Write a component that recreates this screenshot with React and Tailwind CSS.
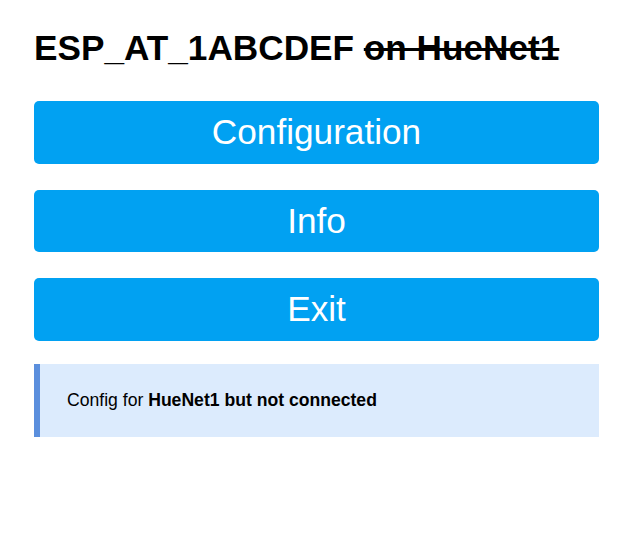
export default function App() {
  return (
    <div className="min-h-[553px] bg-white font-['Liberation_Sans',Arial,sans-serif] text-black">
      <div className="ml-[34px] w-[565px] pt-[26px]">
        <h1 className="text-[35.2px] font-bold leading-[44px]">
          ESP_AT_1ABCDEF <s>on HueNet1</s>
        </h1>
        <div className="mt-[31px] flex flex-col gap-[26px]">
          {['Configuration', 'Info', 'Exit'].map((label) => (
            <button
              key={label}
              className="h-[62.5px] w-full rounded-[5px] bg-[#01a1f2] text-[35.2px] leading-[62px] text-white"
            >
              {label}
            </button>
          ))}
        </div>
        <div className="mt-[23px] flex h-[73px] items-center border-l-[6px] border-[#5b8fdd] bg-[#dcebfd] pl-[27px] text-[17.6px]">
          <span>
            Config for <b>HueNet1 but not connected</b>
          </span>
        </div>
      </div>
    </div>
  )
}
